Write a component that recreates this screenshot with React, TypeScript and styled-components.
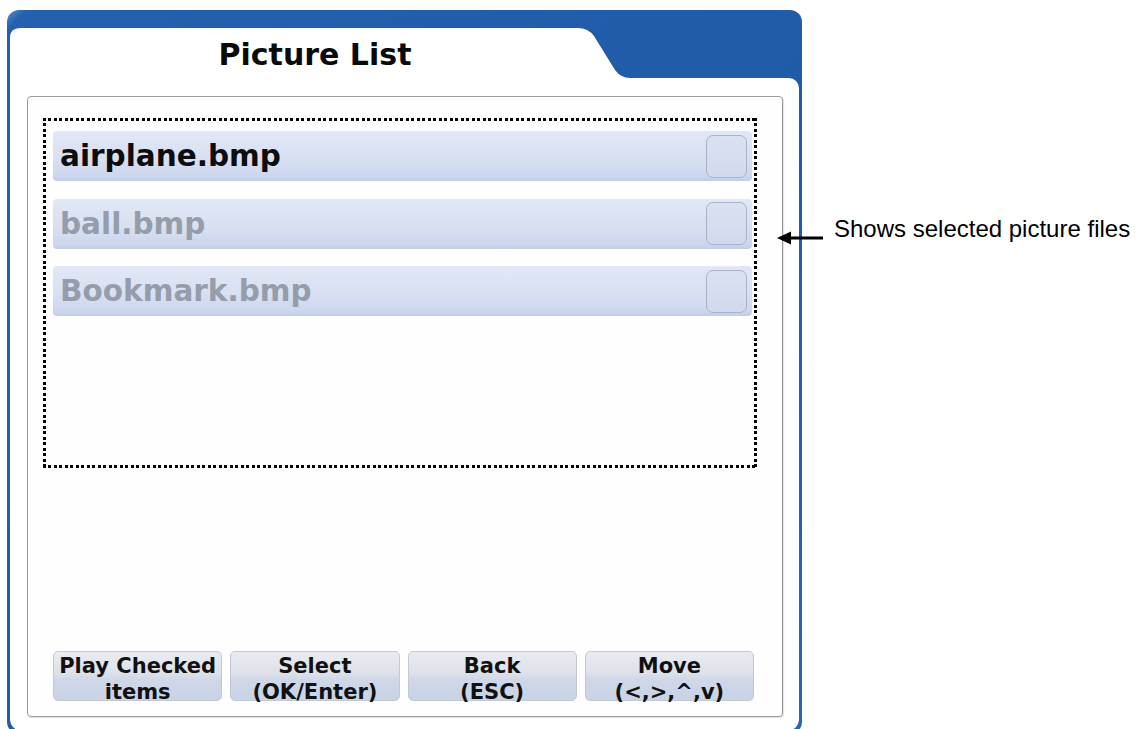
import React from "react";
import styled, { createGlobalStyle } from "styled-components";

const GlobalStyle = createGlobalStyle`
  html, body {
    margin: 0;
    padding: 0;
    background: #ffffff;
    overflow: hidden;
  }
  body {
    font-family: "DejaVu Sans", "Liberation Sans", Arial, sans-serif;
  }
`;

const Page = styled.div`
  position: relative;
  width: 1136px;
  height: 729px;
  overflow: hidden;
  padding: 10px 0 0 7px;
  box-sizing: border-box;
`;

const Device = styled.div`
  width: 795px;
  height: 724px;
  flex-shrink: 0;
  box-sizing: border-box;
  padding: 18px 3px 3px 3px;
  border-radius: 12px;
  background: linear-gradient(135deg, #5d8fcc 0px, #2460ad 14px, #1f5ba7 60%, #2a66b8 100%);
  display: flex;
  flex-direction: column;
`;

const Header = styled.div`
  height: 50px;
  display: flex;
  flex-shrink: 0;
`;

const Tab = styled.div`
  width: 620px;
  height: 50px;
  background: #ffffff;
  clip-path: path("M0 50 L0 10 Q0 0 10 0 L568 0 Q578 0 584 8 L605 42 Q611 50 620 50 Z");
  display: flex;
  align-items: center;
  justify-content: center;
  padding: 3px 10px 0 0;
  box-sizing: border-box;
`;

const Title = styled.h1`
  margin: 0;
  font-family: "DejaVu Sans", "Liberation Sans", sans-serif;
  font-weight: bold;
  font-size: 30px;
  color: #0a0a0a;
`;

const Body = styled.div`
  flex: 1;
  background: #ffffff;
  border-radius: 0 10px 12px 12px;
  padding: 18px 16px 14px 17px;
  display: flex;
  flex-direction: column;
`;

const Panel = styled.div`
  flex: 1;
  border: 1px solid #9c9c9c;
  border-radius: 4px;
  box-shadow: 1px 1px 1px rgba(0, 0, 0, 0.12);
  padding: 21px 25px 15px 15px;
  display: flex;
  flex-direction: column;
  background: #fefefe;
`;

const dotH = "repeating-linear-gradient(90deg, #000 0 3px, transparent 3px 5.5px)";
const dotV = "repeating-linear-gradient(180deg, #000 0 3px, transparent 3px 5.5px)";

const ListBox = styled.div`
  height: 350px;
  box-sizing: border-box;
  padding: 13px 5px 0 10px;
  background:
    ${dotH} top left / 100% 3px no-repeat,
    ${dotH} bottom left / 100% 3px no-repeat,
    ${dotV} top left / 3px 100% no-repeat,
    ${dotV} top right / 3px 100% no-repeat;
  display: flex;
  flex-direction: column;
  gap: 17.5px;
`;

const Row = styled.div`
  height: 50px;
  border-radius: 4px;
  background: linear-gradient(180deg, #e1e7f5 0%, #d8e0f2 55%, #ccd6ee 90%, #c3cde8 100%);
  display: flex;
  align-items: center;
  padding: 0 5px 0 7px;
  box-sizing: border-box;
`;

const FileName = styled.span<{ $active?: boolean }>`
  flex: 1;
  font-family: "DejaVu Sans", "Liberation Sans", sans-serif;
  font-weight: bold;
  font-size: 29.5px;
  color: ${(p) => (p.$active ? "#0d0d0d" : "#959dab")};
`;

const CheckBox = styled.div`
  width: 41px;
  height: 43px;
  box-sizing: border-box;
  border: 1px solid #a9b2c6;
  border-radius: 7px;
  background: linear-gradient(180deg, #dae1f1 0%, #d1d9ee 100%);
`;

const ButtonBar = styled.div`
  margin-top: auto;
  margin-left: 10px;
  margin-right: 3px;
  display: flex;
  gap: 8px;
`;

const Button = styled.button`
  flex: 1;
  height: 50px;
  padding: 1px 0 0 0;
  border: 1px solid #c3c8d3;
  border-radius: 5px;
  background: linear-gradient(180deg, #e9ebf1 0%, #dfe2ea 42%, #cfd7e8 58%, #c9d3e6 100%);
  font-family: "DejaVu Sans", "Liberation Sans", sans-serif;
  font-weight: bold;
  font-size: 21px;
  line-height: 26px;
  color: #111111;
  display: flex;
  flex-direction: column;
  align-items: center;
  justify-content: flex-start;
  overflow: visible;
  white-space: nowrap;
`;

const Callout = styled.div`
  position: absolute;
  left: 777px;
  top: 215px;
  display: flex;
  align-items: flex-start;
  gap: 11px;
`;

const Arrow = styled.svg`
  margin-top: 16px;
  flex-shrink: 0;
`;

const CalloutText = styled.span`
  font-family: "Liberation Sans", Arial, sans-serif;
  font-size: 24px;
  color: #000000;
  white-space: nowrap;
`;

const files = [
  { name: "airplane.bmp", active: true },
  { name: "ball.bmp", active: false },
  { name: "Bookmark.bmp", active: false },
];

const buttons = [
  ["Play Checked", "items"],
  ["Select", "(OK/Enter)"],
  ["Back", "(ESC)"],
  ["Move", "(<,>,^,v)"],
];

export default function App() {
  return (
    <Page>
      <GlobalStyle />
      <Device>
        <Header>
          <Tab>
            <Title>Picture List</Title>
          </Tab>
        </Header>
        <Body>
          <Panel>
            <ListBox>
              {files.map((f) => (
                <Row key={f.name}>
                  <FileName $active={f.active}>{f.name}</FileName>
                  <CheckBox />
                </Row>
              ))}
            </ListBox>
            <ButtonBar>
              {buttons.map(([a, b]) => (
                <Button key={a}>
                  <span>{a}</span>
                  <span>{b}</span>
                </Button>
              ))}
            </ButtonBar>
          </Panel>
        </Body>
      </Device>
      <Callout>
        <Arrow width="46" height="14" viewBox="0 0 46 14">
          <polygon points="0,7 14,0.5 14,13.5" fill="#000" />
          <rect x="12" y="5.5" width="34" height="3" fill="#000" />
        </Arrow>
        <CalloutText>Shows selected picture files</CalloutText>
      </Callout>
    </Page>
  );
}
